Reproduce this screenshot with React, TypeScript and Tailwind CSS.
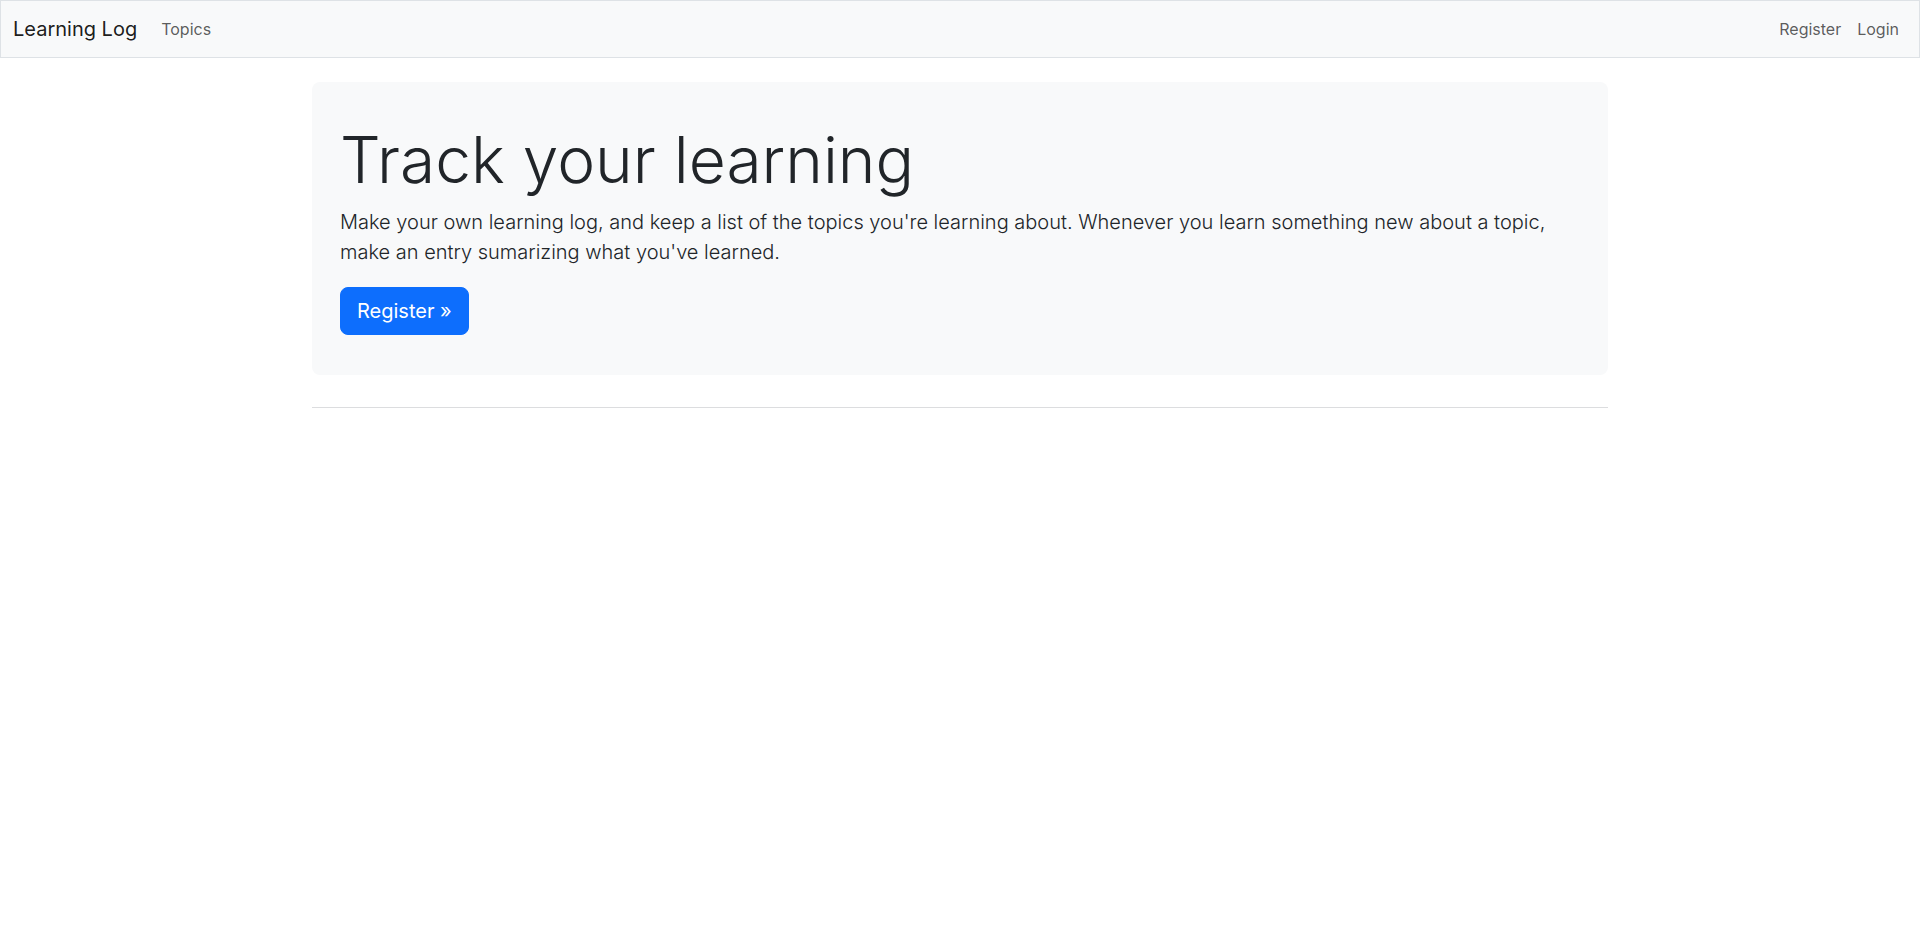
export default function App() {
  return (
    <div className="min-h-screen bg-white text-[#212529]" style={{ fontFamily: "Inter, 'Noto Sans', sans-serif" }}>
      {/* Navbar */}
      <nav className="flex items-center justify-between border border-[#dee2e6] bg-[#f8f9fa] px-[12px] py-[8px]">
        <div className="flex items-center">
          <a href="#" className="mr-[16px] py-[5px] text-[20px] leading-[30px] text-black/90">
            Learning Log
          </a>
          <a href="#" className="p-[8px] text-[16px] leading-[24px] text-black/65">
            Topics
          </a>
        </div>
        <div className="flex items-center">
          <a href="#" className="p-[8px] text-[16px] leading-[24px] text-black/65">
            Register
          </a>
          <a href="#" className="p-[8px] text-[16px] leading-[24px] text-black/65">
            Login
          </a>
        </div>
      </nav>

      <main className="mx-auto w-[1320px] px-[12px] pt-[24px]">
        {/* Jumbotron */}
        <div className="rounded-[8px] bg-[#f8f9fa] px-[28px] pt-[40px] pb-[40px]">
          <h1 className="mb-[8px] text-[64px] font-light leading-[1.2]">Track your learning</h1>
          <p className="mb-[20px] text-[20px] font-light leading-[30px]">
            Make your own learning log, and keep a list of the topics you're learning about. Whenever you learn something new about a topic, make an entry sumarizing what you've learned.
          </p>
          <a
            href="#"
            className="inline-block rounded-[8px] border border-[#0d6efd] bg-[#0d6efd] px-[16px] py-[8px] text-[20px] leading-[30px] text-white"
          >
            Register &raquo;
          </a>
        </div>

        <hr className="mt-[32px] border-t border-[#dcdddf]" />
      </main>
    </div>
  );
}
